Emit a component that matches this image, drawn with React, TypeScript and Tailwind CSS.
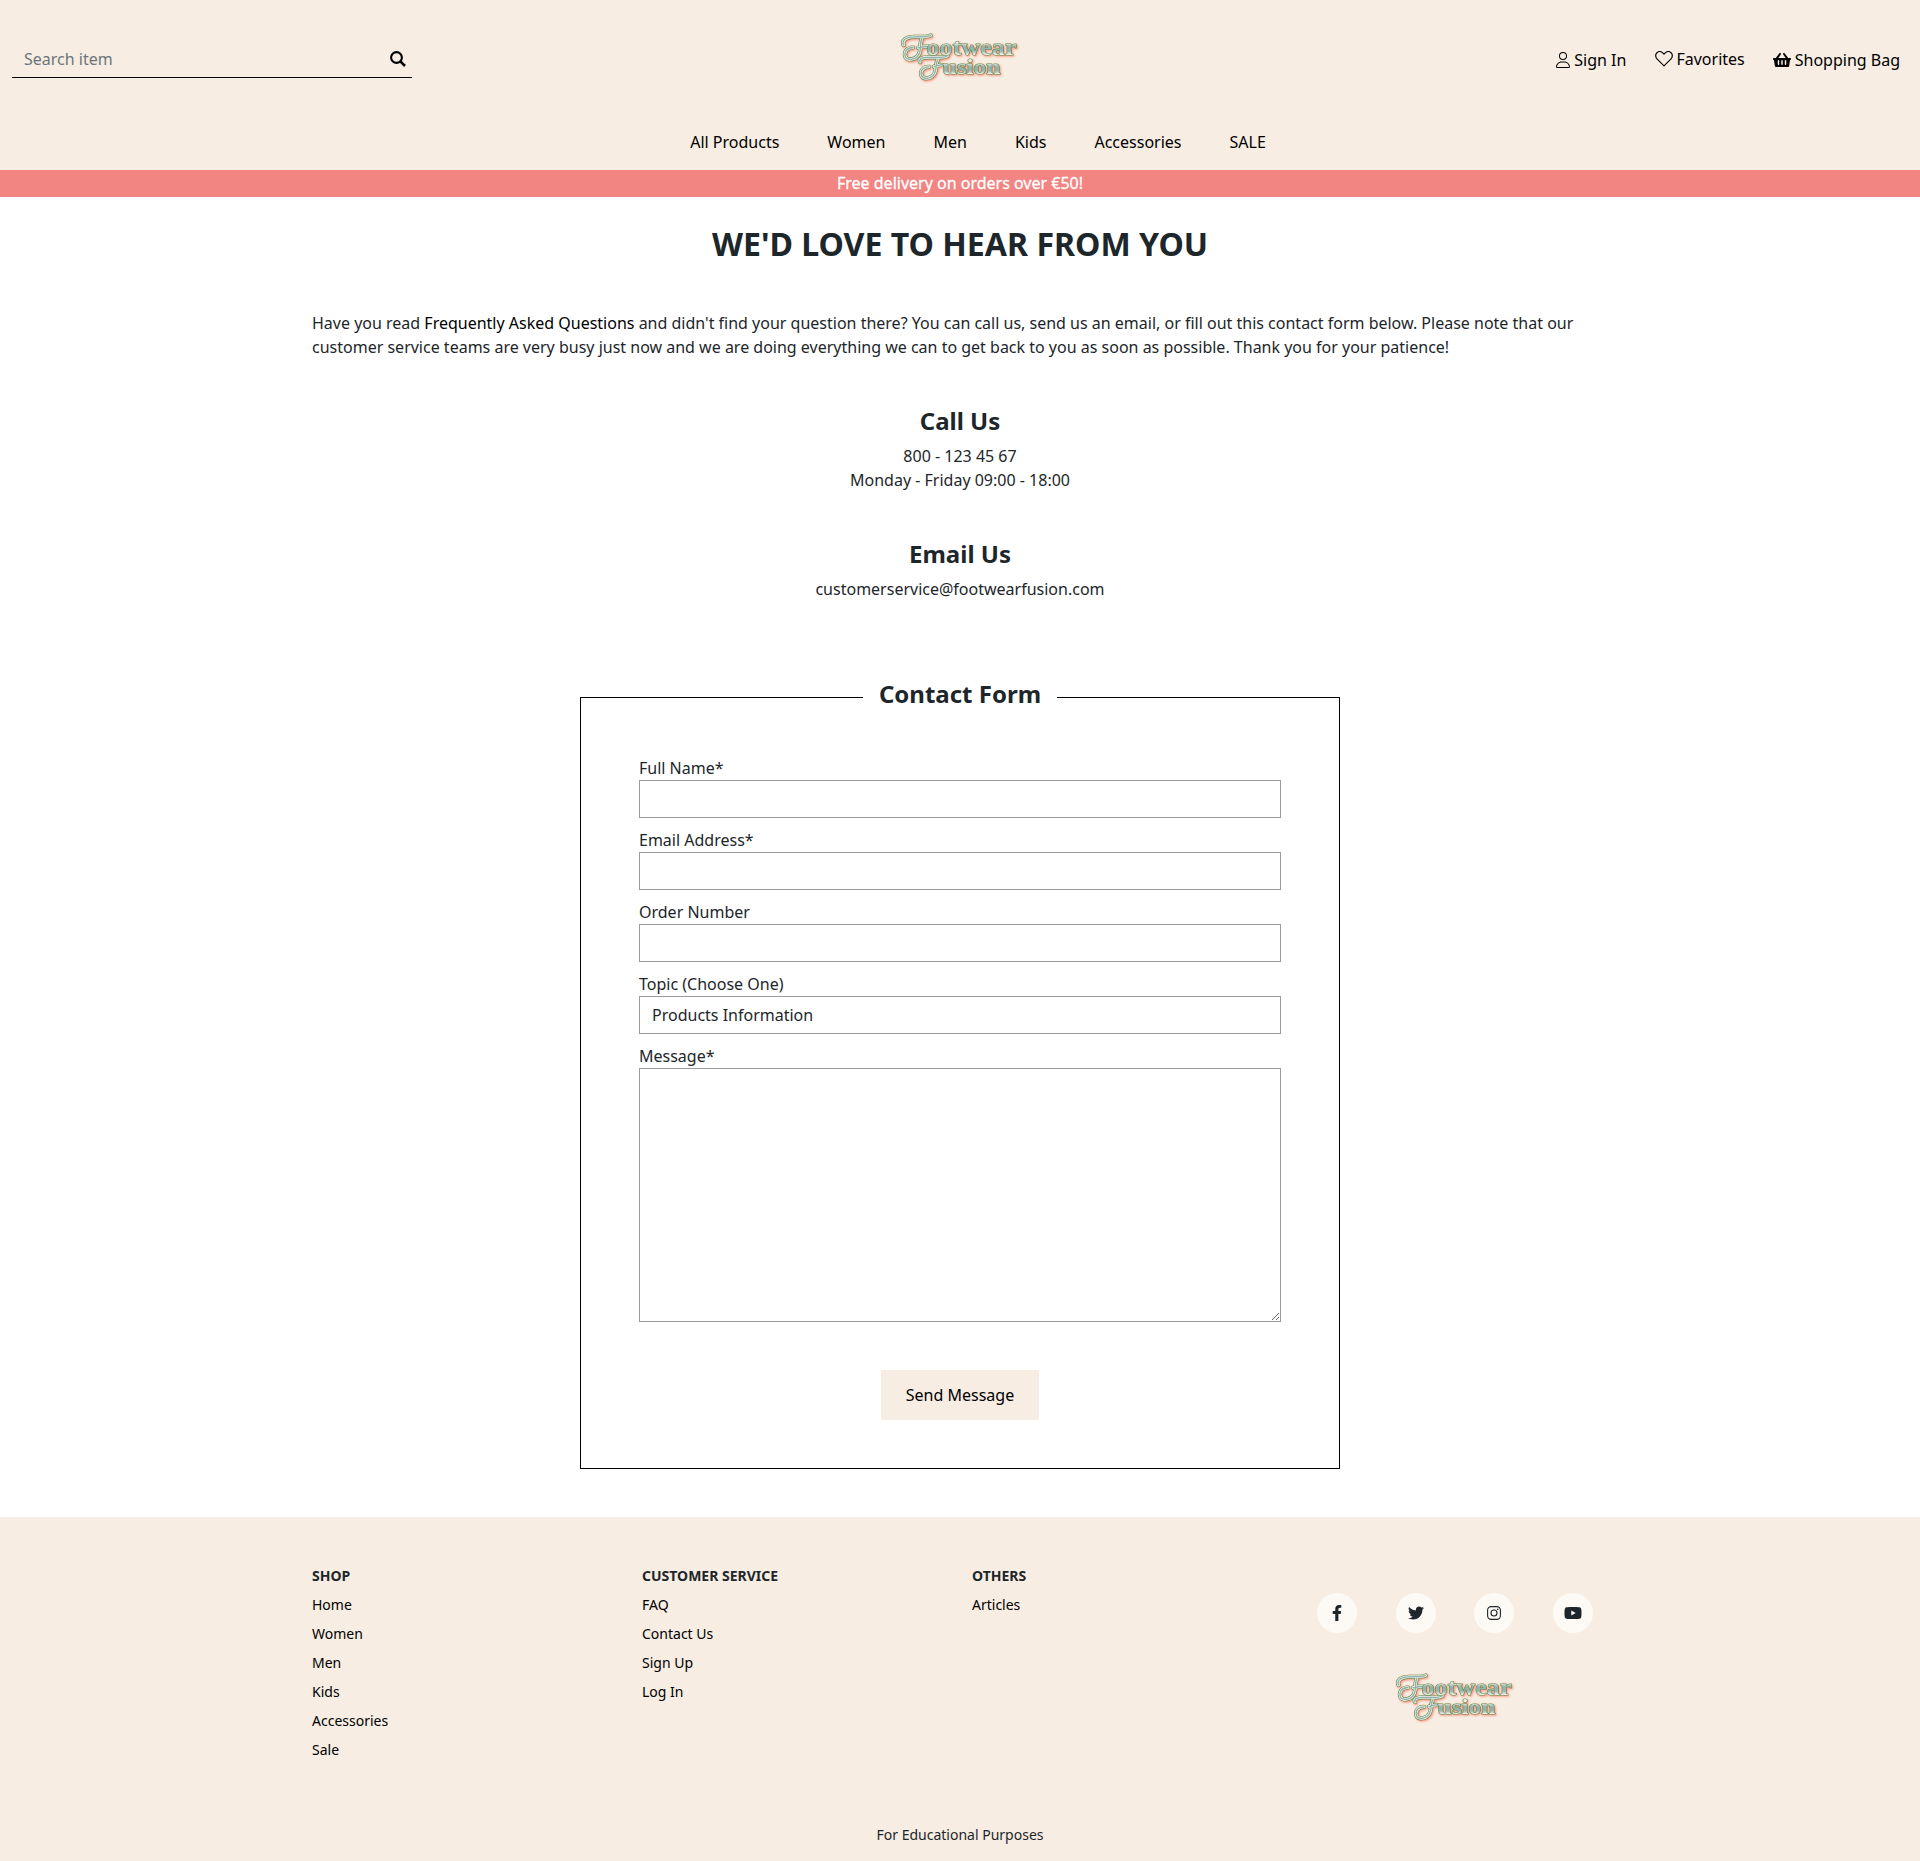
import React from "react";
import { FaFacebookF, FaTwitter, FaShoppingBasket, FaYoutube } from "react-icons/fa";

const swashes = [
  "M23.500 25 C21.500 20 27 16.800 33 16.800 L46 16.500 Q49 16.300 50.500 15.500",
  "M42 18.500 C39.500 22 41.500 27 39.500 33 C37 40 27.500 41 25.500 37 C23.500 32 27 27.500 33 27.500 M38 27.800 Q43 26.500 48 26.500",
  "M40 42 C38.500 38.500 43 37.300 48 37.300 L62 37.300 Q66 37 67.500 35.800",
  "M58 39.500 C55 43 57.500 48 54.500 53.500 C51 59.500 43 59.500 41.500 55.500 C40 51 43 46.800 49 46.800 M54 46.500 Q59 44.500 62 45",
];

function Swashes({ color, width }: { color: string; width: number }) {
  return (
    <g stroke={color} strokeWidth={width} fill="none" strokeLinecap="round" strokeLinejoin="round">
      {swashes.map((d) => (
        <path key={d} d={d} />
      ))}
    </g>
  );
}

function Logo({ id }: { id: string }) {
  return (
    <svg
      width="160"
      height="75"
      viewBox="0 0 160 75"
      role="img"
      aria-label="Footwear Fusion"
      className="block shrink-0 drop-shadow-[1.500px_1.500px_0.800px_#ff8a78]"
    >
      <defs>
        <linearGradient id={id} x1="0" y1="0" x2="0" y2="1">
          <stop offset="0.350" stopColor="#eceeea" />
          <stop offset="0.520" stopColor="#93b0aa" />
          <stop offset="0.680" stopColor="#9ab5af" />
          <stop offset="0.800" stopColor="#eceeea" />
        </linearGradient>
      </defs>
      <Swashes color="#5c8f4b" width={4.2} />
      <Swashes color="#eceeea" width={3} />
      <Swashes color="#93b0aa" width={1.3} />
      <g
        fill={`url(#${id})`}
        stroke="#5c8f4b"
        strokeWidth="1.200"
        strokeLinejoin="round"
        fontFamily="Liberation Serif, serif"
        fontWeight="700"
        className="[paint-order:stroke]"
      >
        <text x="46.500" y="34.500" fontSize="24" textLength="90" lengthAdjust="spacingAndGlyphs">ootwear</text>
        <text x="62.500" y="53.500" fontSize="21" textLength="58" lengthAdjust="spacingAndGlyphs">usion</text>
      </g>
    </svg>
  );
}

function SearchIcon() {
  return (
    <svg width="16" height="16" viewBox="0 0 16 16" fill="none" stroke="currentColor">
      <circle cx="6.500" cy="6.500" r="5.400" strokeWidth="2.100" />
      <path d="M10.400 10.400 L15 15" strokeWidth="2.600" />
    </svg>
  );
}

function UserIcon() {
  return (
    <svg width="14" height="16" viewBox="0 0 448 512" fill="currentColor">
      <path d="M320 128a96 96 0 1 0-192 0 96 96 0 1 0 192 0zM96 128a128 128 0 1 1 256 0A128 128 0 1 1 96 128zM32 480H416c-1.200-79.700-66.200-144-146.300-144H178.300c-80 0-145 64.300-146.300 144zM0 482.300C0 383.800 79.800 304 178.300 304h91.400C368.200 304 448 383.800 448 482.300c0 16.400-13.300 29.700-29.700 29.700H29.700C13.300 512 0 498.700 0 482.300z" />
    </svg>
  );
}

function HeartIcon() {
  return (
    <svg width="18" height="16" viewBox="0 0 18 16" fill="none" stroke="currentColor" strokeWidth="1.150" strokeLinejoin="round">
      <path d="M9 14.800 L2 7.900 C0.300 6.100 0.200 3.300 1.900 1.800 C3.600 0.200 6.100 0.400 7.700 1.900 L9 3.200 L10.300 1.900 C11.900 0.400 14.400 0.200 16.100 1.800 C17.800 3.300 17.700 6.100 16 7.900 Z" />
    </svg>
  );
}

function InstagramIcon() {
  return (
    <svg width="14" height="14" viewBox="0 0 14 14" fill="none" stroke="currentColor" strokeWidth="1.100">
      <rect x="0.600" y="0.600" width="12.800" height="12.800" rx="3.600" />
      <circle cx="7" cy="7" r="3" />
      <circle cx="10.700" cy="3.300" r="0.800" fill="currentColor" stroke="none" />
    </svg>
  );
}

const columns = [
  { title: "SHOP", links: ["Home", "Women", "Men", "Kids", "Accessories", "Sale"] },
  { title: "CUSTOMER SERVICE", links: ["FAQ", "Contact Us", "Sign Up", "Log In"] },
  { title: "OTHERS", links: ["Articles"] },
];

const socials = [
  { name: "Facebook", icon: <FaFacebookF size={16} /> },
  { name: "Twitter", icon: <FaTwitter size={16} /> },
  { name: "Instagram", icon: <InstagramIcon /> },
  { name: "YouTube", icon: <FaYoutube className="h-4 w-[18px]" /> },
];

function Field({ label, value = "" }: { label: string; value?: string }) {
  return (
    <label className="mb-2.5 block">
      {label}
      <input className="block h-[38px] w-full border border-[#9b9b9b] bg-white px-3 outline-none" defaultValue={value} />
    </label>
  );
}

export default function App() {
  return (
    <div className="flex h-[1861px] w-full flex-col overflow-hidden bg-white font-['Noto_Sans',sans-serif] text-base leading-6 text-[#1d262a]">
      <header className="h-[170px] shrink-0 bg-[#f7ede2] text-black">
        <div className="grid h-[118px] grid-cols-[1fr_160px_1fr] items-start">
          <div className="ml-3 mt-10 flex h-[38px] w-[400px] items-center border-b border-black pl-3 pr-1.5">
            <input className="min-w-0 flex-1 bg-transparent outline-none placeholder:text-[#6c757d]" placeholder="Search item" />
            <SearchIcon />
          </div>
          <div className="mt-5">
            <Logo id="logo-header" />
          </div>
          <div className="mr-5 mt-12 flex items-start justify-end">
            <a className="flex items-center gap-1"><UserIcon />Sign In</a>
            <a className="-mt-px ml-[29px] flex items-center gap-[3px]"><HeartIcon />Favorites</a>
            <a className="ml-7 flex items-center gap-1"><FaShoppingBasket className="h-4 w-[18px]" />Shopping Bag</a>
          </div>
        </div>
        <nav className="flex justify-center gap-12 pl-9 pt-3">
          {["All Products", "Women", "Men", "Kids", "Accessories", "SALE"].map((item) => (
            <a key={item}>{item}</a>
          ))}
        </nav>
      </header>
      <div className="h-[27px] shrink-0 bg-[#f28482] text-center leading-[27px] text-white [-webkit-text-stroke:0.300px_white]">
        Free delivery on orders over €50!
      </div>

      <main className="mx-auto w-[1296px] flex-1">
        <h1 className="mt-[27px] text-center text-[32.100px] font-bold leading-10">WE'D LOVE TO HEAR FROM YOU</h1>
        <p className="mt-[47px]">
          Have you read <a className="text-black">Frequently Asked Questions</a> and didn't find your question there? You can call us, send us an email, or fill out this contact form below. Please note that our customer service teams are very busy just now and we are doing everything we can to get back to you as soon as possible. Thank you for your patience!
        </p>
        <section className="mt-12 text-center">
          <h2 className="mb-[9px] text-2xl font-bold leading-7">Call Us</h2>
          <p>800 - 123 45 67</p>
          <p>Monday - Friday 09:00 - 18:00</p>
        </section>
        <section className="mt-12 text-center">
          <h2 className="mb-[9px] text-2xl font-bold leading-7">Email Us</h2>
          <p>customerservice@footwearfusion.com</p>
        </section>
        <form className="mx-auto mt-24 h-[772px] w-[760px] border border-black px-[58px]">
          <div className="-mt-[18px] mb-[45px] flex justify-center">
            <h2 className="bg-white px-4 text-2xl font-bold leading-7">Contact Form</h2>
          </div>
          <div className="pt-[3px]">
            <Field label="Full Name*" />
            <Field label="Email Address*" />
            <Field label="Order Number" />
            <Field label="Topic (Choose One)" value="Products Information" />
            <label className="block">
              Message*
              <textarea className="block h-[254px] w-full resize border border-[#9b9b9b] bg-white px-3 py-1.5 outline-none" />
            </label>
          </div>
          <div className="mt-12 flex justify-center">
            <button type="button" className="h-[50px] w-[158px] bg-[#f7ede2] text-black">Send Message</button>
          </div>
        </form>
      </main>

      <footer className="h-[344px] shrink-0 bg-[#f7ede2]">
        <div className="mx-auto flex h-[308px] w-[1296px] pt-11 text-sm">
          {columns.map((col) => (
            <div key={col.title} className="w-[330px] leading-[29px]">
              <h3 className="font-bold">{col.title}</h3>
              <ul className="text-black">
                {col.links.map((link) => (
                  <li key={link}>{link}</li>
                ))}
              </ul>
            </div>
          ))}
          <div className="flex flex-1 flex-col items-center pt-8">
            <div className="flex w-[276px] justify-between">
              {socials.map((social) => (
                <a key={social.name} aria-label={social.name} className="flex size-10 items-center justify-center rounded-full bg-[#fdf9f5]">
                  {social.icon}
                </a>
              ))}
            </div>
            <div className="mt-[27px]">
              <Logo id="logo-footer" />
            </div>
          </div>
        </div>
        <p className="text-center text-sm">For Educational Purposes</p>
      </footer>
    </div>
  );
}
